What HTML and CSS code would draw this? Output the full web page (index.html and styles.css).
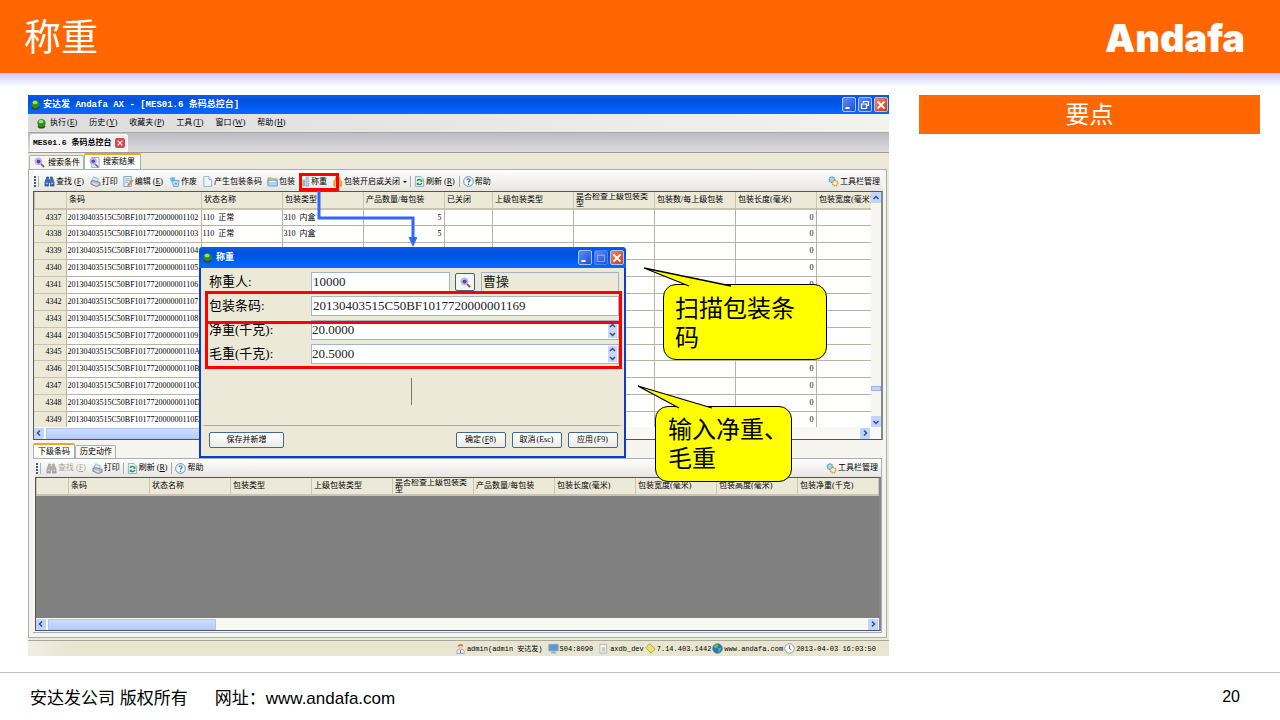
FILE: index.html
```
<!DOCTYPE html>
<html lang="zh-CN">
<head>
    <meta charset="utf-8">
    <meta name="viewport" content="width=device-width, initial-scale=1">
    <title>称重</title>
    <link rel="stylesheet" href="styles.css">
</head>
<body>

<!-- icons -->
<svg class="defs" width="0" height="0">
    <symbol id="i-ball" viewBox="0 0 12 12"><ellipse cx="6" cy="9" rx="4" ry="2.5" fill="#3c3c2c"/><circle cx="6" cy="5.5" r="4.5" fill="#2f8f1c"/><ellipse cx="5.5" cy="3.8" rx="2.6" ry="2" fill="#9be07c"/></symbol>
    <symbol id="i-lens" viewBox="0 0 12 12"><path d="M7 7l4 4" stroke="#8a5a5a" stroke-width="2"/><circle cx="4.8" cy="4.8" r="3.8" fill="#cfc6f2" stroke="#b5b5cc"/><circle cx="5" cy="5" r="2.3" fill="#5a3fc0"/></symbol>
    <symbol id="i-lenspage" viewBox="0 0 12 12"><path d="M3 .5h8v11H3z" fill="#e8eefa" stroke="#9ab"/><path d="M6 7l4 4" stroke="#8a5a5a" stroke-width="1.6"/><circle cx="4.5" cy="4.5" r="3.4" fill="#cfc6f2" stroke="#a9a9cc"/><circle cx="4.6" cy="4.6" r="2" fill="#5a3fc0"/></symbol>
    <symbol id="i-find" viewBox="0 0 12 12"><path d="M3 1h2v3h2V1h2l2 6v4H7V7H5v4H1V7z" fill="#3d6fb8" stroke="#234a86" stroke-width=".7"/><path d="M2 8h2M8 8h2" stroke="#cfe2ff"/></symbol>
    <symbol id="i-print" viewBox="0 0 12 12"><path d="M2 5l2-4 5 2-1 4z" fill="#d9ecff" stroke="#6d93bb" stroke-width=".7"/><path d="M1 6l3-1 7 2v3l-4 1.5L1 9z" fill="#b9c0c8" stroke="#666e78" stroke-width=".8"/><path d="M3 8l5 2" stroke="#eef" /></symbol>
    <symbol id="i-edit" viewBox="0 0 12 12"><path d="M1 .5h8v11H1z" fill="#e5f0fc" stroke="#6fa0d0"/><path d="M2.500 3h5M2.500 5h5M2.500 7h3" stroke="#6fa0d0" stroke-width=".8"/><path d="M11 5L7 10l-2 1 .6-2L9.500 4z" fill="#f2902c" stroke="#b86212" stroke-width=".5"/></symbol>
    <symbol id="i-void" viewBox="0 0 12 12"><path d="M1 2l5-1 1 4-5 1z" fill="#5ec0f0"/><path d="M3 5h8l-1 6.500H5z" fill="#b9defa" stroke="#4f8cc8" stroke-width=".8"/><path d="M6 9l1.500-2L9 9z" fill="#2aa04c"/></symbol>
    <symbol id="i-page" viewBox="0 0 12 12"><path d="M2 .5h5.500L10.500 4v7.500H2z" fill="#eef5fd" stroke="#8fabc8"/><path d="M7.500.5V4h3" fill="#fff" stroke="#8fabc8"/></symbol>
    <symbol id="i-box" viewBox="0 0 12 12"><path d="M1 2h4l1 1h5v7.500H1z" fill="#e0c878" stroke="#8d9cae" stroke-width=".7"/><path d="M.8 4.500h10.500v6.500H1.500z" fill="#a8d5f0" stroke="#5b90b8" stroke-width=".7"/><path d="M3 6h6" stroke="#fff"/></symbol>
    <symbol id="i-weigh" viewBox="0 0 12 12"><path d="M2.500 4h3v7h-3z" fill="#7cc4a0"/><path d="M6.500 1h3v10h-3z" fill="#b8cdea" stroke="#7d98bf" stroke-width=".6"/></symbol>
    <symbol id="i-lock" viewBox="0 0 12 12"><path d="M3.500 6V3.500a2.500 2.500 0 015 0V6" fill="none" stroke="#c9a040" stroke-width="1.400"/><path d="M2 5.500h8.500v5.500H2z" fill="#f0b848" stroke="#b9822a" stroke-width=".7"/></symbol>
    <symbol id="i-refresh" viewBox="0 0 12 12"><path d="M1.500.5h6L10.500 3.500v8h-9z" fill="#e4effc" stroke="#8fabc8"/><path d="M3.500 5.500C4 3.500 7.500 3.200 8 5M8.500 7.500C8 9.800 4.800 10 4 8.300" fill="none" stroke="#1f9a30" stroke-width="1.500"/><path d="M9.200 3.500v2.700H6.700zM3 10V7.300h2.600z" fill="#1f9a30"/></symbol>
    <symbol id="i-help" viewBox="0 0 12 12"><circle cx="6" cy="6" r="5.300" fill="#f4f9ff" stroke="#5585bd"/><path d="M4.300 4.700c0-2.400 3.500-2.200 3.400-.2C7.600 5.800 6 5.700 6 7.300" fill="none" stroke="#2e66ae" stroke-width="1.200"/><circle cx="6" cy="9" r=".8" fill="#2e66ae"/></symbol>
    <symbol id="i-gears" viewBox="0 0 12 12"><circle cx="4.300" cy="4" r="3" fill="#a9d8ee" stroke="#4c9dc6" stroke-width="1.300" stroke-dasharray="1.600 .6"/><circle cx="7.700" cy="7.800" r="3" fill="#fbe0a8" stroke="#d49a45" stroke-width="1.300" stroke-dasharray="1.600 .6"/><circle cx="7.700" cy="7.800" r="1" fill="#fff"/></symbol>
    <symbol id="i-user" viewBox="0 0 12 12"><path d="M2 11.500V9c0-3 8-3 8 0v2.500z" fill="#e4edf8" stroke="#7d93b8" stroke-width=".8"/><circle cx="6" cy="4" r="2.600" fill="#f3c9a0"/><path d="M3 4C2.500 0 9.500 0 9 4 8 2.500 5 2.500 3 4z" fill="#c87838"/><path d="M6 8v3" stroke="#3a5cb0"/></symbol>
    <symbol id="i-pc" viewBox="0 0 12 12"><path d="M1 1.500h10v7H1z" fill="#5e97d8" stroke="#8aa0bb"/><path d="M4 9h4l1 2.500H3z" fill="#9fb1c6"/></symbol>
    <symbol id="i-db" viewBox="0 0 12 12"><path d="M2 1.500h7.500v9.500H2z" fill="#f4f4f4" stroke="#b5b5b5"/><path d="M4 4.500h4v5H4z" fill="#c8ccd2"/></symbol>
    <symbol id="i-tag" viewBox="0 0 12 12"><path d="M.8 5L5 .8 11.200 6.500 6.500 11.200z" fill="#e6e46a" stroke="#a09c30" stroke-width=".8"/></symbol>
    <symbol id="i-globe" viewBox="0 0 12 12"><circle cx="6" cy="6" r="5.200" fill="#2d74c8" stroke="#30598a" stroke-width=".7"/><path d="M2 4c1-3 4-3 5-2L6 5 4 6zM7 6l3-1-1 4-2 1z" fill="#5fc05a"/></symbol>
    <symbol id="i-clock" viewBox="0 0 12 12"><circle cx="6" cy="6" r="5.200" fill="#fafafa" stroke="#9a9a9a"/><path d="M6 2.500V6l2 1.500" fill="none" stroke="#556" stroke-width=".9"/></symbol>
    <symbol id="i-left" viewBox="0 0 8 8"><path d="M5 1.500L2.500 4 5 6.500" fill="none" stroke="#35507e" stroke-width="1.500"/></symbol>
    <symbol id="i-right" viewBox="0 0 8 8"><path d="M3 1.500L5.500 4 3 6.500" fill="none" stroke="#35507e" stroke-width="1.500"/></symbol>
    <symbol id="i-up" viewBox="0 0 8 8"><path d="M1.500 5L4 2.500 6.500 5" fill="none" stroke="#35507e" stroke-width="1.500"/></symbol>
    <symbol id="i-down" viewBox="0 0 8 8"><path d="M1.500 3L4 5.500 6.500 3" fill="none" stroke="#35507e" stroke-width="1.500"/></symbol>
    <symbol id="i-min" viewBox="0 0 12 12"><path d="M2.500 9h4" stroke="#fff" stroke-width="2"/></symbol>
    <symbol id="i-restore" viewBox="0 0 12 12"><path d="M4.500 4V2.500h5v4H8M2.500 5h5v4.500h-5z" fill="none" stroke="#fff" stroke-width="1.200"/></symbol>
    <symbol id="i-max" viewBox="0 0 12 12"><path d="M2.500 3h7v6.500h-7zM2.500 3.500h7" fill="none" stroke="#7fa2f2" stroke-width="1.200"/></symbol>
    <symbol id="i-close" viewBox="0 0 12 12"><path d="M2.500 2.500l7 7M9.500 2.500l-7 7" stroke="#fff" stroke-width="1.800"/></symbol>
</svg>

<header class="slide-header">
    <h1>称重</h1>
    <div class="brand">Andafa</div>
</header>

<main class="slide-body">
    <div class="app">
        <div class="titlebar">
            <svg class="icon"><use href="#i-ball"/></svg>
            <span class="title">安达发 Andafa AX - [MES01.6 条码总控台]</span>
            <button class="winbtn" aria-label="最小化"><svg><use href="#i-min"/></svg></button>
            <button class="winbtn" aria-label="还原"><svg><use href="#i-restore"/></svg></button>
            <button class="winbtn close" aria-label="关闭"><svg><use href="#i-close"/></svg></button>
        </div>
        <nav class="menubar">
            <svg class="icon"><use href="#i-ball"/></svg>
            <button>执行<span class="key">(<u>E</u>)</span></button>
            <button>历史<span class="key">(<u>Y</u>)</span></button>
            <button>收藏夹<span class="key">(<u>P</u>)</span></button>
            <button>工具<span class="key">(<u>T</u>)</span></button>
            <button>窗口<span class="key">(<u>W</u>)</span></button>
            <button>帮助<span class="key">(<u>H</u>)</span></button>
        </nav>
        <div class="doctabs">
            <div class="doctab">MES01.6 条码总控台 <button class="tabclose" aria-label="关闭"><svg><use href="#i-close"/></svg></button></div>
        </div>
        <div class="tabs">
            <button class="tab"><svg class="icon"><use href="#i-lens"/></svg>搜索条件</button>
            <button class="tab active"><svg class="icon"><use href="#i-lenspage"/></svg>搜索结果</button>
        </div>
        <div class="page">
            <div class="toolbar">
                <i class="grip"></i>
                <button><svg class="icon"><use href="#i-find"/></svg>查找<span class="key">(<u>F</u>)</span></button>
                <button><svg class="icon"><use href="#i-print"/></svg>打印</button>
                <button><svg class="icon"><use href="#i-edit"/></svg>编辑<span class="key">(<u>E</u>)</span></button>
                <button><svg class="icon"><use href="#i-void"/></svg>作废</button>
                <button><svg class="icon"><use href="#i-page"/></svg>产生包装条码</button>
                <button><svg class="icon"><use href="#i-box"/></svg>包装</button>
                <button class="weigh"><svg class="icon"><use href="#i-weigh"/></svg>称重</button>
                <button><svg class="icon"><use href="#i-lock"/></svg>包装开启或关闭<i class="caret"></i></button>
                <i class="sep"></i>
                <button><svg class="icon"><use href="#i-refresh"/></svg>刷新<span class="key">(<u>R</u>)</span></button>
                <i class="sep"></i>
                <button><svg class="icon"><use href="#i-help"/></svg>帮助</button>
                <button class="right"><svg class="icon"><use href="#i-gears"/></svg>工具栏管理</button>
            </div>
            <div class="grid">
                <div class="grid-view">
                    <div class="grid-clip">
                        <table class="data">
                            <colgroup>
                                <col class="c-no"><col class="c-code"><col><col><col><col class="c-closed"><col><col><col><col><col>
                            </colgroup>
                            <thead>
                                <tr><th></th><th>条码</th><th>状态名称</th><th>包装类型</th><th>产品数量/每包装</th><th>已关闭</th><th>上级包装类型</th><th class="wrap"><div>是否检查上级包装类型</div></th><th>包装数/每上级包装</th><th>包装长度(毫米)</th><th>包装宽度(毫米)</th></tr>
                            </thead>
                            <tbody id="rows"></tbody>
                        </table>
                    </div>
                    <div class="vscroll">
                        <button aria-label="向上"><svg><use href="#i-up"/></svg></button>
                        <i class="thumb"></i>
                        <button aria-label="向下"><svg><use href="#i-down"/></svg></button>
                    </div>
                </div>
                <div class="hscroll">
                    <button aria-label="向左"><svg><use href="#i-left"/></svg></button>
                    <i class="thumb"></i>
                    <button aria-label="向右"><svg><use href="#i-right"/></svg></button>
                </div>
            </div>
            <div class="tabs lower">
                <button class="tab active">下级条码</button>
                <button class="tab">历史动作</button>
            </div>
            <div class="subpage">
                <div class="toolbar">
                    <i class="grip"></i>
                    <button class="off" disabled><svg class="icon"><use href="#i-find"/></svg>查找<span class="key">(<u>F</u>)</span></button>
                    <button><svg class="icon"><use href="#i-print"/></svg>打印</button>
                    <i class="sep"></i>
                    <button><svg class="icon"><use href="#i-refresh"/></svg>刷新<span class="key">(<u>R</u>)</span></button>
                    <i class="sep"></i>
                    <button><svg class="icon"><use href="#i-help"/></svg>帮助</button>
                    <button class="right"><svg class="icon"><use href="#i-gears"/></svg>工具栏管理</button>
                </div>
                <div class="grid empty">
                    <div class="grid-view">
                        <div class="grid-clip">
                            <table class="data">
                                <colgroup>
                                    <col class="c-no"><col><col><col><col><col><col><col><col><col><col><col>
                                </colgroup>
                                <thead>
                                    <tr><th></th><th>条码</th><th>状态名称</th><th>包装类型</th><th>上级包装类型</th><th class="wrap"><div>是否检查上级包装类型</div></th><th>产品数量/每包装</th><th>包装长度(毫米)</th><th>包装宽度(毫米)</th><th>包装高度(毫米)</th><th>包装净重(千克)</th><th></th></tr>
                                </thead>
                            </table>
                        </div>
                    </div>
                    <div class="hscroll">
                        <button aria-label="向左"><svg><use href="#i-left"/></svg></button>
                        <i class="thumb"></i>
                        <button aria-label="向右"><svg><use href="#i-right"/></svg></button>
                    </div>
                </div>
            </div>
        </div>
        <div class="status">
            <svg class="icon"><use href="#i-user"/></svg><span>admin(admin 安达发)</span>
            <svg class="icon gap"><use href="#i-pc"/></svg><span>S04:8090</span>
            <svg class="icon gap"><use href="#i-db"/></svg><span>axdb_dev</span>
            <svg class="icon"><use href="#i-tag"/></svg><span>7.14.403.1442</span>
            <svg class="icon"><use href="#i-globe"/></svg><span>www.andafa.com</span>
            <svg class="icon"><use href="#i-clock"/></svg><span>2013-04-03 16:03:50</span>
        </div>

        <!-- arrow from the toolbar to the dialog -->
        <svg class="arrow" viewBox="0 0 104 58"><path d="M6 1v27h94v20" fill="none" stroke="#3366ff" stroke-width="3"/><path d="M95.500 47h9L100 57z" fill="#3366ff"/></svg>
        <div class="mark mark-tool"></div>

        <form class="dialog">
            <div class="titlebar">
                <svg class="icon"><use href="#i-ball"/></svg>
                <span class="title">称重</span>
                <button type="button" class="winbtn" aria-label="最小化"><svg><use href="#i-min"/></svg></button>
                <button type="button" class="winbtn max" aria-label="最大化"><svg><use href="#i-max"/></svg></button>
                <button type="button" class="winbtn close" aria-label="关闭"><svg><use href="#i-close"/></svg></button>
            </div>
            <div class="fields">
                <label for="person">称重人:</label>
                <div class="field">
                    <input type="text" id="person" class="short" value="10000">
                    <button type="button" class="lookup" aria-label="查找"><svg class="icon"><use href="#i-lens"/></svg></button>
                    <input type="text" class="name" aria-label="姓名" value="曹操" readonly>
                </div>
                <label for="barcode">包装条码:</label>
                <div class="field"><input type="text" id="barcode" value="20130403515C50BF1017720000001169"></div>
                <label for="net">净重(千克):</label>
                <div class="field spin"><input type="text" id="net" value="20.0000"><div class="spinner"><button type="button" aria-label="增加"><svg><use href="#i-up"/></svg></button><button type="button" aria-label="减少"><svg><use href="#i-down"/></svg></button></div></div>
                <label for="gross">毛重(千克):</label>
                <div class="field spin"><input type="text" id="gross" value="20.5000"><div class="spinner"><button type="button" aria-label="增加"><svg><use href="#i-up"/></svg></button><button type="button" aria-label="减少"><svg><use href="#i-down"/></svg></button></div></div>
            </div>
            <div class="bar"></div>
            <div class="actions">
                <button type="button" class="btn wide">保存并新增</button>
                <button type="button" class="btn">确定<span class="key">(<u>F</u>8)</span></button>
                <button type="button" class="btn">取消<span class="key">(Esc)</span></button>
                <button type="button" class="btn">应用<span class="key">(F9)</span></button>
            </div>
            <div class="mark mark-code"></div>
            <div class="mark mark-weight"></div>
        </form>

        <div class="callout scan">
            <svg viewBox="0 0 90 20"><path d="M46 19L1 1l87 18" fill="#ff0" stroke="#000" stroke-width="1.300"/></svg>
            扫描包装条码
        </div>
        <div class="callout input">
            <svg viewBox="0 0 90 24"><path d="M42 23L1 1l74 22" fill="#ff0" stroke="#000" stroke-width="1.300"/></svg>
            输入净重、毛重
        </div>
    </div>

    <aside class="points">
        <h2>要点</h2>
    </aside>
</main>

<footer class="slide-footer">
    <span>安达发公司 版权所有</span>
    <span class="site">网址：<a href="#">www.andafa.com</a></span>
    <span class="page-no">20</span>
</footer>

<script>
var rows = [
    ['102', '110&nbsp; 正常', '310&nbsp; 内盒', '5'],
    ['103', '110&nbsp; 正常', '310&nbsp; 内盒', '5'],
    ['104'], ['105'], ['106'], ['107'], ['108'], ['109'],
    ['10A'], ['10B'], ['10C'], ['10D'], ['10E']
];
var html = '';
for (var i = 0; i < rows.length; i++) {
    var r = rows[i];
    html += '<tr><th>' + (4337 + i) + '</th><td>20130403515C50BF1017720000001' + r[0] + '</td>' +
        '<td>' + (r[1] || '') + '</td><td>' + (r[2] || '') + '</td><td class="num">' + (r[3] || '') + '</td>' +
        '<td></td><td></td><td></td><td></td><td class="num">0</td><td></td></tr>';
}
document.getElementById('rows').innerHTML = html;
</script>

</body>
</html>
```
FILE: styles.css
```
* {
  box-sizing: border-box;
}
body {
  margin: 0;
  min-height: 100vh;
  display: flex;
  flex-direction: column;
  background: #fff;
  font-family: "Liberation Sans", "Noto Sans CJK SC", sans-serif;
}
h1, h2 {
  margin: 0;
  font-weight: 400;
}
button {
  font: inherit;
  color: inherit;
  background: none;
  border: 0;
  padding: 0;
  margin: 0;
  display: flex;
  align-items: center;
  white-space: nowrap;
}
input {
  font: inherit;
}
.defs {
  position: absolute;
}
.icon {
  width: 11px;
  height: 11px;
  flex: none;
}
.key {
  padding: 0 1px;
}

/* slide */
.slide-header {
  display: flex;
  justify-content: space-between;
  align-items: center;
  height: 73px;
  padding: 0 35px 0 24px;
  background: #ff6600;
  color: #fff;
}
.slide-header h1 {
  padding-top: 4px;
  font-size: 37px;
  line-height: 68px;
}
.brand {
  font-family: Inter, sans-serif;
  font-weight: 900;
  font-size: 38px;
  padding-top: 2px;
}
.slide-body {
  flex: 1;
  display: grid;
  grid-template-columns: 861fr 341fr;
  gap: 30px;
  align-items: start;
  padding: 22px 20px 16px 28px;
  background: linear-gradient(#ccccff, #fff 14px);
}
.points h2 {
  background: #ff6600;
  border: 4px solid #ff6a08;
  color: #fff;
  font-size: 24px;
  line-height: 31px;
  text-align: center;
}
.slide-footer {
  display: flex;
  align-items: center;
  height: 48px;
  padding: 0 40px 0 30px;
  border-top: 1px solid #c0c0c0;
  font-size: 17px;
}
.slide-footer .site {
  margin-left: 27px;
}
.slide-footer a {
  color: #000;
  text-decoration: none;
}
.page-no {
  margin-left: auto;
  font-size: 16px;
}

/* application window */
.app {
  position: relative;
  min-width: 0;
  background: #ece9d8;
  color: #000;
  font: 8px/10px "Liberation Serif", "Noto Sans CJK SC", serif;
}
.titlebar {
  display: flex;
  align-items: center;
  gap: 2px;
  height: 19px;
  padding: 0 1px 0 2px;
  background: linear-gradient(#0a5cf0, #0050dc 30%, #0062f8 75%, #0a66ff);
  color: #fff;
  font-family: "Liberation Mono", "Noto Sans CJK SC", monospace;
  font-size: 9px;
  font-weight: bold;
}
.titlebar .title {
  flex: 1;
}
.winbtn {
  justify-content: center;
  width: 14px;
  height: 15px;
  border: 1px solid #a8c4ff;
  border-radius: 2px;
  background: linear-gradient(135deg, #5b8df8, #1d4fd8);
}
.winbtn svg {
  width: 12px;
  height: 12px;
}
.winbtn.max {
  border-color: #4f7fe8;
}
.winbtn.close {
  background: linear-gradient(135deg, #f0886a, #d03810);
}
.menubar {
  display: flex;
  align-items: center;
  gap: 11px;
  height: 18px;
  padding-left: 5px;
  background: linear-gradient(90deg, #dcdcdc, #f2f3ec);
}
.menubar .icon {
  margin-right: -11px;
  width: 17px;
}
.doctabs {
  display: flex;
  align-items: flex-end;
  height: 21px;
  padding-left: 2px;
  background: linear-gradient(#bcbcc2, #dcdce0);
  border-top: 1px solid #a8a8a8;
  border-bottom: 1px solid #9a9a9a;
}
.doctab {
  display: flex;
  align-items: center;
  gap: 4px;
  height: 18px;
  padding: 0 2px;
  background: #f2f2f2;
  border: 1px solid #fff;
  border-radius: 2px 2px 0 0;
  font-family: "Liberation Mono", "Noto Sans CJK SC", monospace;
  font-weight: bold;
}
.tabclose {
  justify-content: center;
  width: 10px;
  height: 10px;
  border-radius: 2px;
  background: #d8474c;
}
.tabclose svg {
  width: 8px;
  height: 8px;
}
.tabs {
  display: flex;
  align-items: flex-end;
  height: 16px;
  padding-left: 1px;
}
.tab {
  gap: 3px;
  height: 14px;
  padding: 0 3px 0 4px;
  background: #f6f5f0;
  border: 1px solid #a9b1b5;
  border-bottom: 0;
  border-radius: 2px 2px 0 0;
}
.tab.active {
  height: 16px;
  padding: 0 5px 0 4px;
  background: #fcfcfb;
  border-top: 2px solid #f5a21c;
}
.page {
  margin-right: 2px;
  padding: 0 3px 4px 4px;
  background: #f5f4ef;
  border: 1px solid #a3b0b8;
}
.toolbar {
  display: flex;
  align-items: center;
  gap: 5px;
  height: 21px;
  padding: 2px 0 0 1px;
  background: linear-gradient(#fefefe, #e6e5e0);
}
.toolbar button {
  gap: 1px;
}
.toolbar .right {
  margin: 0 3px 0 auto;
}
.toolbar .weigh {
  gap: 0;
}
.toolbar .off {
  color: #aca899;
}
.off .icon {
  filter: grayscale(1);
  opacity: .5;
}
.grip {
  width: 5px;
  height: 11px;
  border-right: 1px solid #b0b0b0;
  background: radial-gradient(circle at 1px 1px, #44588a 1px, transparent 1px) 0 0 / 3px 3px repeat-y;
}
.caret {
  margin-left: 2px;
  border: 2px solid transparent;
  border-top-color: #000;
  border-bottom: 0;
}
.sep {
  width: 1px;
  height: 11px;
  margin: 0 -2px;
  background: #aaa;
}
.grid {
  border: 1px solid #555;
  border-right: 2px solid #888;
  background: #fff;
}
.grid-view {
  display: flex;
}
.grid-clip {
  flex: 1;
  min-width: 0;
  height: 235px;
  overflow: hidden;
}
.data {
  width: 0;
  min-width: 863px;
  height: 237px;
  table-layout: fixed;
  border-collapse: collapse;
}
.data col {
  width: 81px;
}
.data .c-no {
  width: 32px;
}
.data .c-code {
  width: 135px;
}
.data .c-closed {
  width: 48px;
}
.data th, .data td {
  height: 16px;
  padding: 0 2px;
  font-weight: normal;
  line-height: 10px;
  white-space: nowrap;
  overflow: hidden;
}
.data td {
  padding-left: 1px;
  border-right: 1px solid #b8b4a4;
  border-bottom: 1px solid #b8b4a4;
}
.data th {
  background: #ece9d8;
}
.data thead th {
  height: 17px;
  text-align: left;
  padding: 0 3px;
  border-bottom: 2px solid #c8c4b0;
  background: linear-gradient(90deg, #cac6b4 1px, #ece9d8 1px);
}
.data tbody th {
  text-align: right;
  padding-right: 4px;
  border-right: 1px solid #b8b4a4;
  border-bottom: 1px solid #c8c4b0;
}
.data td.num {
  text-align: right;
}
.data .wrap div {
  height: 14px;
  line-height: 7px;
  white-space: normal;
  overflow: hidden;
}
.vscroll {
  display: flex;
  flex-direction: column;
  width: 10px;
  background: #f6f6f0;
}
.vscroll .thumb {
  height: 5px;
  margin: auto 0 25px;
  background: #c2d3fc;
  border: 1px solid #9db4ea;
}
.vscroll button, .hscroll button {
  justify-content: center;
  width: 10px;
  height: 11px;
  background: #c2d3fc;
  border-radius: 1px;
}
.vscroll svg, .hscroll svg {
  width: 8px;
  height: 8px;
}
.hscroll {
  display: flex;
  align-items: center;
  height: 12px;
  padding-right: 1px;
  background: #f8f8f4;
}
.hscroll .thumb {
  width: 20%;
  height: 11px;
  margin: 0 auto 0 2px;
  background: linear-gradient(#cddcff, #b8ccfb);
  border: 1px solid #b0c4f4;
}
.page > .grid > .hscroll {
  padding-right: 11px;
}
.lower {
  padding-left: 0;
  margin-top: 3px;
  height: 15px;
}
.lower .tab {
  height: 13px;
}
.lower .tab.active {
  height: 15px;
  padding: 0 4px;
}
.subpage {
  margin-right: 1px;
  padding: 0 0 1px 2px;
  border: 1px solid #a3b0b8;
  border-left-width: 0;
}
.subpage .toolbar {
  height: 18px;
  padding-top: 0;
}
.empty, .empty .grid-view {
  background: #808080;
}
.empty .grid-clip {
  height: 140px;
}
.empty .data {
  min-width: 922px;
  height: 18px;
}
.status {
  display: flex;
  align-items: center;
  justify-content: flex-end;
  gap: 1px;
  height: 16px;
  margin-top: 2px;
  padding: 0 13px 0 0;
  border-top: 1px solid #aaa79a;
  background: linear-gradient(90deg, #f0eee4, #e8e5d0 5%);
  font-family: "Liberation Mono", "Noto Sans CJK SC", monospace;
  font-size: 7px;
}
.status .gap {
  margin-left: 4px;
}

/* highlights drawn over the window */
.mark {
  position: absolute;
  border: 3px solid #f00;
  pointer-events: none;
}
.mark-tool {
  left: 271px;
  top: 78px;
  width: 40px;
  height: 18px;
}
.arrow {
  position: absolute;
  left: 285px;
  top: 95px;
  width: 104px;
  height: 58px;
}

/* weighing dialog */
.dialog {
  position: absolute;
  left: 171px;
  top: 152px;
  width: 427px;
  padding: 0 2px 2px;
  background: #0a3cd0;
  border-radius: 4px 4px 0 0;
}
.dialog .titlebar {
  height: 21px;
  margin: 0 -2px;
  padding: 0 2px 0 3px;
  border-radius: 4px 4px 0 0;
}
.dialog .title {
  padding-left: 1px;
}
.fields {
  display: grid;
  grid-template-columns: 102px minmax(0, 1fr);
  row-gap: 4px;
  padding: 4px 5px 0 8px;
  background: #ece9d8;
  font-size: 13px;
  line-height: 20px;
}
.fields label {
  white-space: nowrap;
}
.field {
  display: flex;
  gap: 5px;
  height: 20px;
}
.field input {
  flex: 1;
  min-width: 0;
  padding: 0 1px;
  background: #fff;
  border: 1px solid #9fb6cc;
  color: #222;
}
.field .short {
  flex: none;
  width: 139px;
}
.field .name {
  margin-left: 1px;
  background: #ece9d8;
}
.lookup {
  justify-content: center;
  width: 20px;
  height: 18px;
  margin-top: 1px;
  background: #f6f5ee;
  border: 1px solid #3c6090;
  border-radius: 2px;
}
.spin {
  background: #fff;
  border: 1px solid #9fb6cc;
}
.field.spin input {
  padding: 0;
  border: 0;
}
.spinner {
  width: 9px;
  margin: 1px;
  background: #c6d6fc;
}
.spinner button, .spinner svg {
  width: 9px;
  height: 8px;
}
.bar {
  height: 62px;
  border: solid #ece9d8;
  border-width: 0 7px 0 5px;
  border-bottom: 1px solid #aca899;
  background: #ece9d8 linear-gradient(#777, #777) 50% 14px / 1px 27px no-repeat;
}
.actions {
  display: flex;
  gap: 6px;
  padding: 6px 6px 8px 8px;
  background: #ece9d8;
}
.btn {
  justify-content: center;
  width: 50px;
  height: 16px;
  background: linear-gradient(#fff, #ecebe4);
  border: 1px solid #3c6a9c;
  border-radius: 2px;
}
.btn.wide {
  width: 75px;
  margin-right: auto;
}
.mark-code {
  left: 6px;
  top: 44px;
  width: 417px;
  height: 33px;
}
.mark-weight {
  left: 6px;
  top: 74px;
  width: 417px;
  height: 48px;
}

/* speech bubbles */
.callout {
  position: absolute;
  height: 76px;
  padding: 7px 11px;
  background: #ff0;
  border: 1px solid #000;
  border-radius: 13px;
  font: 24px/29px "Noto Sans CJK SC", sans-serif;
}
.callout svg {
  position: absolute;
  width: 90px;
}
.scan {
  left: 635px;
  top: 189px;
  width: 164px;
}
.scan svg {
  left: -21px;
  top: -18px;
  height: 20px;
}
.input {
  left: 627px;
  top: 311px;
  width: 137px;
  padding: 6px 0 0 12px;
}
.input svg {
  left: -19px;
  top: -22px;
  height: 24px;
}
```
